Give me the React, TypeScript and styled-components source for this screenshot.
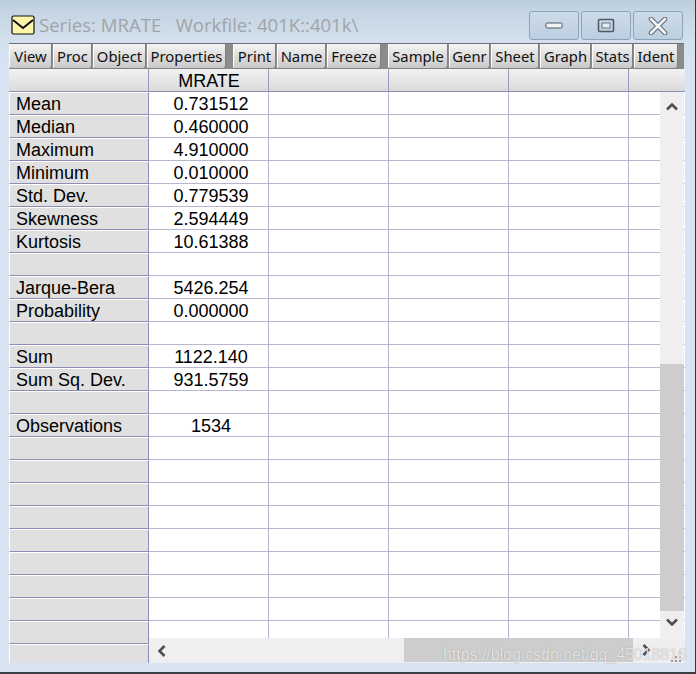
import React from "react";
import styled, { createGlobalStyle } from "styled-components";

const Global = createGlobalStyle`
  html, body { margin: 0; padding: 0; background: #d8e4f1; }
  * { box-sizing: border-box; }
`;

const Frame = styled.div`
  width: 696px;
  height: 674px;
  overflow: hidden;
  position: relative;
  padding: 0 11px 0 9px;
  background: linear-gradient(#bccede 0, #c9d8e6 20px, #d4e1ee 44px, #d8e4f1 70px);
  border-right: 1px solid #33373d;
  &::after {
    content: "";
    position: absolute;
    left: 0;
    right: 0;
    top: 672px;
    height: 2px;
    background: #3c4047;
  }
`;

const TitleBar = styled.div`
  height: 43px;
  display: flex;
  align-items: flex-start;
  padding-top: 11px;
  padding-right: 1px;
`;

const DocIcon = styled.svg`
  width: 24px;
  height: 20px;
  margin: 4px 4px 0 2px;
  flex: none;
`;

const Title = styled.div`
  font: 18.6px/26px "Open Sans", "Noto Sans", sans-serif;
  color: #a0a4a8;
  white-space: pre;
  flex: 1;
  margin-top: 1px;
  letter-spacing: -0.02px;
`;

const WinButton = styled.div`
  width: 50px;
  height: 29px;
  margin-left: 2px;
  border: 1px solid #8da3ba;
  border-radius: 3px;
  background: linear-gradient(#cddbe8, #bccfe1);
  display: flex;
  align-items: center;
  justify-content: center;
  flex: none;
`;

const Toolbar = styled.div`
  height: 26px;
  display: flex;
  background: #8b8b8b;
  border-top: 1px solid #6f6f6f;
`;

const ToolButton = styled.div<{ $w: number }>`
  width: ${(p) => p.$w}px;
  margin-right: 1px;
  flex: none;
  background: linear-gradient(#f4f4f4, #dcdcdc 55%, #c9c9c9);
  border-right: 1px solid #808080;
  border-bottom: 1px solid #808080;
  border-left: 1px solid #fff;
  border-radius: 0 0 3px 3px;
  font: 14.8px/24px "Noto Sans", "Open Sans", sans-serif;
  color: #111;
  text-align: center;
  white-space: nowrap;
  overflow: hidden;
`;

const ToolGap = styled.div<{ $w: number }>`
  width: ${(p) => p.$w}px;
  flex: none;
`;

const Grid = styled.div`
  position: relative;
  height: 594px;
  width: 676px;
  overflow: hidden;
  background: #fff;
  font: 18px/22px "Liberation Sans", Arial, sans-serif;
  color: #000;
`;

const HeaderRow = styled.div`
  display: grid;
  grid-template-columns: 140px repeat(4, 120px) 56px;
  grid-template-rows: 22px;
  height: 23px;
  background: linear-gradient(#f2f2f2, #dadada);
  border-bottom: 1px solid #8f8db5;
`;

const HeaderCell = styled.div`
  border-right: 1px solid #9c9ac0;
  text-align: center;
  padding: 1px 0 0 1px;
  line-height: 22px;
  &:last-child { border-right: 0; }
`;

const Row = styled.div`
  display: grid;
  grid-template-columns: 140px repeat(4, 120px) 56px;
  grid-template-rows: 23px;
  height: 23px;
`;

const LabelCell = styled.div`
  background: #e0e0e0;
  border-left: 1px solid #fff;
  border-top: 1px solid #fff;
  border-right: 1px solid #8f8db5;
  border-bottom: 1px solid #8f8db5;
  padding-left: 6px;
  line-height: 22px;
  white-space: nowrap;
`;

const Cell = styled.div`
  border-right: 1px solid #b9b6d2;
  border-bottom: 1px solid #b9b6d2;
  text-align: center;
  padding: 1px 0 0 5px;
  line-height: 22px;
  white-space: nowrap;
  &:last-child { border-right: 0; }
`;

const VScroll = styled.div`
  position: absolute;
  top: 23px;
  left: 651px;
  width: 24px;
  height: 546px;
  background: #efefef;
`;

const VThumb = styled.div`
  position: absolute;
  top: 272px;
  left: 0;
  width: 24px;
  height: 247px;
  background: #cdcdcd;
`;

const ArrowIcon = styled.svg<{ $top?: number; $left?: number }>`
  position: absolute;
  top: ${(p) => p.$top ?? 0}px;
  left: ${(p) => p.$left ?? 0}px;
  width: 12px;
  height: 12px;
`;

const HScroll = styled.div`
  position: absolute;
  left: 140px;
  top: 569px;
  width: 536px;
  height: 25px;
  background: #efefef;
`;

const HThumb = styled.div`
  position: absolute;
  left: 255px;
  top: 0;
  width: 229px;
  height: 24px;
  background: #cdcdcd;
`;

const Corner = styled.svg`
  position: absolute;
  left: 662px;
  top: 583px;
  width: 12px;
  height: 12px;
`;

const Watermark = styled.div`
  position: absolute;
  left: 443px;
  top: 645px;
  font: 15.9px/20px "Liberation Sans", Arial, sans-serif;
  color: rgba(255, 255, 255, 0.75);
  text-shadow: 0 0 1px rgba(110, 110, 110, 0.7);
  white-space: nowrap;
`;

const stats: [string, string][] = [
  ["Mean", "0.731512"],
  ["Median", "0.460000"],
  ["Maximum", "4.910000"],
  ["Minimum", "0.010000"],
  ["Std. Dev.", "0.779539"],
  ["Skewness", "2.594449"],
  ["Kurtosis", "10.61388"],
  ["", ""],
  ["Jarque-Bera", "5426.254"],
  ["Probability", "0.000000"],
  ["", ""],
  ["Sum", "1122.140"],
  ["Sum Sq. Dev.", "931.5759"],
  ["", ""],
  ["Observations", "1534"],
];

const rows: [string, string][] = [
  ...stats,
  ...Array.from({ length: 10 }, () => ["", ""] as [string, string]),
];

type Tool = { label?: string; w: number };
const tools: Tool[] = [
  { label: "View", w: 43 },
  { label: "Proc", w: 39 },
  { label: "Object", w: 53 },
  { label: "Properties", w: 79 },
  { w: 6 },
  { label: "Print", w: 43 },
  { label: "Name", w: 49 },
  { label: "Freeze", w: 54 },
  { w: 6 },
  { label: "Sample", w: 60 },
  { label: "Genr", w: 41 },
  { label: "Sheet", w: 48 },
  { label: "Graph", w: 51 },
  { label: "Stats", w: 41 },
  { label: "Ident", w: 44 },
];

const chevron = "#4f4f4f";

export default function App() {
  return (
    <>
      <Global />
      <Frame>
        <TitleBar>
          <DocIcon viewBox="0 0 24 20">
            <rect x="1" y="1" width="22" height="18" rx="1.5" fill="#fdf5a8" stroke="#111" strokeWidth="1.2" />
            <path d="M2 5 L12 13 L22 5" fill="none" stroke="#111" strokeWidth="2" />
          </DocIcon>
          <Title>{"Series: MRATE   Workfile: 401K::401k\\"}</Title>
          <WinButton>
            <svg width="18" height="8" viewBox="0 0 18 8">
              <rect x="1" y="1" width="16" height="5" rx="1" fill="#f2f2f2" stroke="#4e5a66" strokeWidth="1" />
            </svg>
          </WinButton>
          <WinButton>
            <svg width="18" height="16" viewBox="0 0 18 16">
              <rect x="1.5" y="1.5" width="15" height="12" rx="1" fill="none" stroke="#4e5a66" strokeWidth="1.6" />
              <rect x="5" y="5" width="8" height="5" fill="#e6eef5" stroke="#4e5a66" strokeWidth="0.8" />
            </svg>
          </WinButton>
          <WinButton>
            <svg width="20" height="18" viewBox="0 0 20 18">
              <path d="M3 2 L17 16 M17 2 L3 16" stroke="#5a6672" strokeWidth="4.6" strokeLinecap="round" />
              <path d="M3 2 L17 16 M17 2 L3 16" stroke="#f3f3f3" strokeWidth="2.8" strokeLinecap="round" />
            </svg>
          </WinButton>
        </TitleBar>
        <Toolbar>
          {tools.map((t, i) =>
            t.label ? (
              <ToolButton key={i} $w={t.w}>
                {t.label}
              </ToolButton>
            ) : (
              <ToolGap key={i} $w={t.w} />
            ),
          )}
        </Toolbar>
        <Grid>
          <HeaderRow>
            <HeaderCell />
            <HeaderCell>MRATE</HeaderCell>
            <HeaderCell />
            <HeaderCell />
            <HeaderCell />
            <HeaderCell />
          </HeaderRow>
          {rows.map(([label, value], i) => (
            <Row key={i}>
              <LabelCell>{label}</LabelCell>
              <Cell>{value}</Cell>
              <Cell />
              <Cell />
              <Cell />
              <Cell />
            </Row>
          ))}
          <VScroll>
            <ArrowIcon $top={9} $left={6} viewBox="0 0 12 12">
              <path d="M1 8.5 L6 3.5 L11 8.5" fill="none" stroke={chevron} strokeWidth="2.6" />
            </ArrowIcon>
            <VThumb />
            <ArrowIcon $top={524} $left={6} viewBox="0 0 12 12">
              <path d="M1 3.5 L6 8.5 L11 3.5" fill="none" stroke={chevron} strokeWidth="2.6" />
            </ArrowIcon>
          </VScroll>
          <HScroll>
            <ArrowIcon $top={7} $left={7} viewBox="0 0 12 12">
              <path d="M8.5 1 L3.5 6 L8.5 11" fill="none" stroke={chevron} strokeWidth="2.6" />
            </ArrowIcon>
            <HThumb />
            <ArrowIcon $top={6} $left={491} viewBox="0 0 12 12">
              <path d="M3.5 1 L8.5 6 L3.5 11" fill="none" stroke={chevron} strokeWidth="2.6" />
            </ArrowIcon>
          </HScroll>
          <Corner viewBox="0 0 12 12">
            <g fill="#9a9a9a">
              <rect x="8" y="0" width="2" height="2" />
              <rect x="4" y="4" width="2" height="2" />
              <rect x="8" y="4" width="2" height="2" />
              <rect x="0" y="8" width="2" height="2" />
              <rect x="4" y="8" width="2" height="2" />
              <rect x="8" y="8" width="2" height="2" />
            </g>
          </Corner>
        </Grid>
        <Watermark>https://blog.csdn.net/qq_45018816</Watermark>
      </Frame>
    </>
  );
}
